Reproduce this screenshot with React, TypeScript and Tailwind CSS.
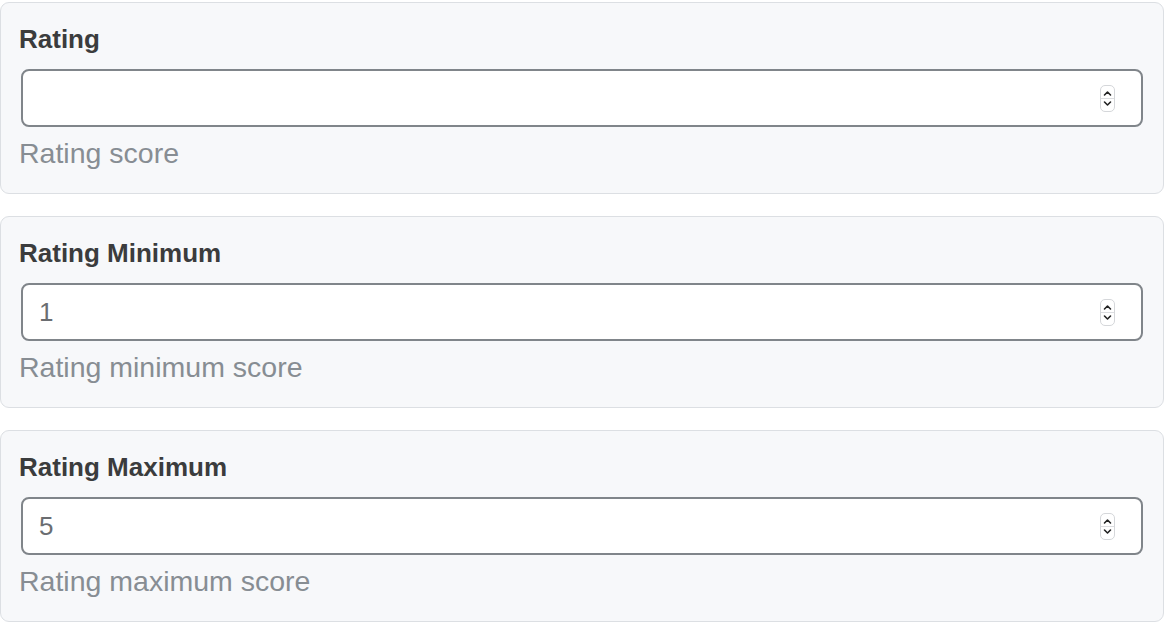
import React from "react";

function Spinner() {
  return (
    <div className="flex h-[27px] w-[15px] flex-col items-center justify-center rounded-[5px] border border-[#d5d7da] bg-white">
      <svg width="9" height="7" viewBox="0 0 9 7" className="mb-[1px]">
        <path d="M1.5 5 L4.5 2 L7.5 5" fill="none" stroke="#222" strokeWidth="1.6" strokeLinecap="round" strokeLinejoin="round" />
      </svg>
      <div className="h-px w-full bg-[#dcdde0]" />
      <svg width="9" height="7" viewBox="0 0 9 7" className="mt-[1px]">
        <path d="M1.5 2 L4.5 5 L7.5 2" fill="none" stroke="#222" strokeWidth="1.6" strokeLinecap="round" strokeLinejoin="round" />
      </svg>
    </div>
  );
}

function Field({ label, value, help }: { label: string; value: string; help: string }) {
  return (
    <div className="flex h-[192px] w-[1164px] flex-col rounded-[9px] border border-[#dcdfe3] bg-[#f7f8fa] pl-[18px] pr-[20px] pt-[21px]">
      <div className="h-[30px] text-[26px] font-bold leading-[30px] text-[#3b3c3d]">{label}</div>
      <div className="ml-[2px] mt-[15px] flex h-[58px] w-[1122px] items-center rounded-[8px] border-2 border-[#80858a] bg-white pl-[16px] pr-[26px]">
        <span className="flex-1 text-[26px] leading-[30px] text-[#6a6d71]">{value}</span>
        <Spinner />
      </div>
      <div className="mt-[10px] h-[32px] text-[28.5px] leading-[32px] text-[#878d93]">{help}</div>
    </div>
  );
}

export default function App() {
  return (
    <div
      className="flex h-[628px] w-[1170px] flex-col gap-[22px] bg-white pt-[2px]"
      style={{ fontFamily: '"Liberation Sans", Arial, sans-serif' }}
    >
      <Field label="Rating" value="" help="Rating score" />
      <Field label="Rating Minimum" value="1" help="Rating minimum score" />
      <Field label="Rating Maximum" value="5" help="Rating maximum score" />
    </div>
  );
}
